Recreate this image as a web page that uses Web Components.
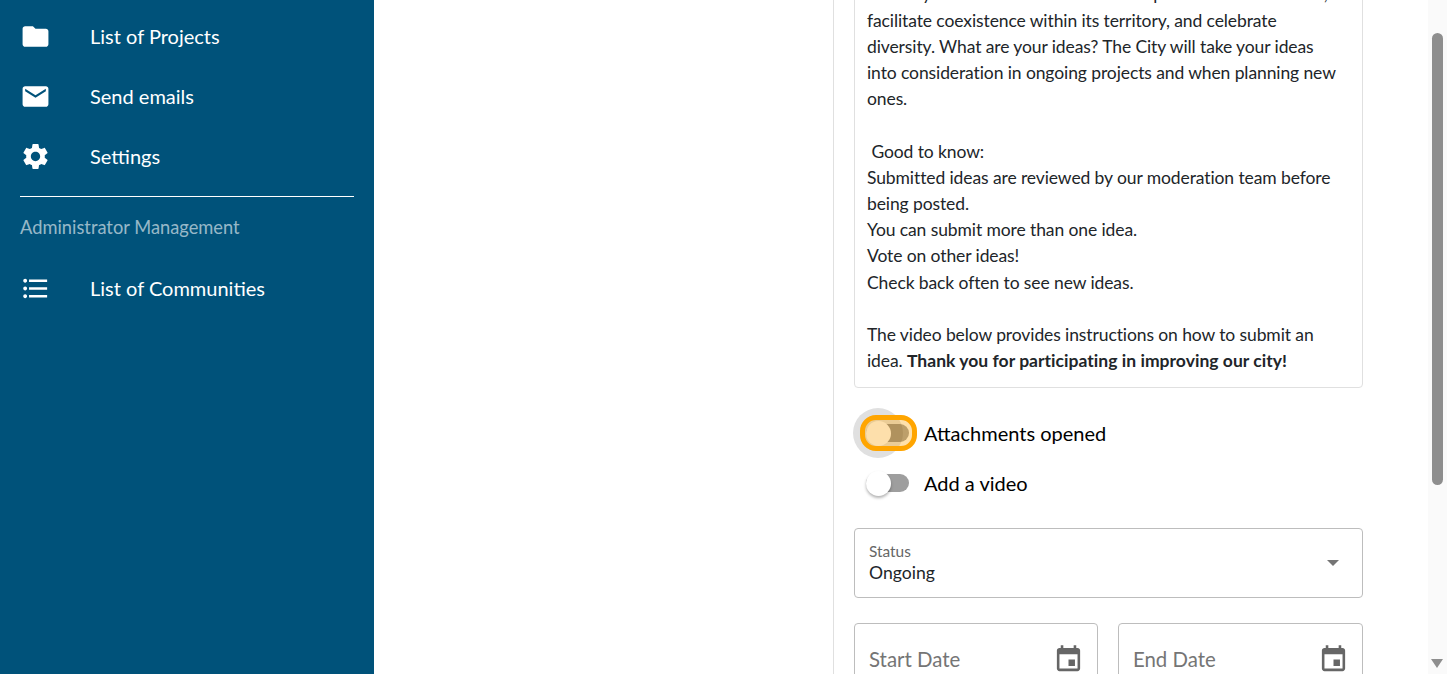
<!DOCTYPE html>
<html lang="en">
<head>
  <meta charset="UTF-8">
  <title>Project form</title>
  <style>
    html, body { height: 100%; }
    body { margin: 0; overflow: hidden; display: flex; background: #fff; font-family: Lato, "Liberation Sans", sans-serif; }
    b { letter-spacing: .03px; }
  </style>
</head>
<body>
  <side-bar>
    <nav-item icon="folder">List of Projects</nav-item>
    <nav-item icon="mail">Send emails</nav-item>
    <nav-item icon="settings">Settings</nav-item>
    <nav-heading>Administrator Management</nav-heading>
    <nav-item icon="list">List of Communities</nav-item>
  </side-bar>
  <form-panel>
    <notice-box>
      The City has chosen to continue to improve its local facilities,
      facilitate coexistence within its territory, and celebrate
      diversity. What are your ideas? The City will take your ideas
      into consideration in ongoing projects and when planning new
      ones.<br><br>
      &nbsp;Good to know:<br>
      Submitted ideas are reviewed by our moderation team before
      being posted.<br>
      You can submit more than one idea.<br>
      Vote on other ideas!<br>
      Check back often to see new ideas.<br><br>
      The video below provides instructions on how to submit an
      idea. <b>Thank you for participating in improving our city!</b>
    </notice-box>
    <toggle-switch focused>Attachments opened</toggle-switch>
    <toggle-switch>Add a video</toggle-switch>
    <select-field label="Status">Ongoing</select-field>
    <date-row>
      <date-field>Start Date</date-field>
      <date-field>End Date</date-field>
    </date-row>
  </form-panel>
  <page-scrollbar></page-scrollbar>

  <script>
    const ICONS = {
      folder: 'M10 4H4c-1.1 0-1.99.9-1.99 2L2 18c0 1.1.9 2 2 2h16c1.1 0 2-.9 2-2V8c0-1.1-.9-2-2-2h-8l-2-2z',
      mail: 'M20 4H4c-1.1 0-1.99.9-1.99 2L2 18c0 1.1.9 2 2 2h16c1.1 0 2-.9 2-2V6c0-1.1-.9-2-2-2zm0 4l-8 5-8-5V6l8 5 8-5v2z',
      settings: 'M19.14 12.94c.04-.3.06-.61.06-.94 0-.32-.02-.64-.07-.94l2.03-1.58c.18-.14.23-.41.12-.61l-1.92-3.32c-.12-.22-.37-.29-.59-.22l-2.39.96c-.5-.38-1.03-.7-1.62-.94l-.36-2.54c-.04-.24-.24-.41-.48-.41h-3.84c-.24 0-.43.17-.47.41l-.36 2.54c-.59.24-1.13.57-1.62.94l-2.39-.96c-.22-.08-.47 0-.59.22L2.74 8.87c-.12.21-.08.47.12.61l2.03 1.58c-.05.3-.09.63-.09.94s.02.64.07.94l-2.03 1.58c-.18.14-.23.41-.12.61l1.92 3.32c.12.22.37.29.59.22l2.39-.96c.5.38 1.03.7 1.62.94l.36 2.54c.05.24.24.41.48.41h3.84c.24 0 .44-.17.47-.41l.36-2.54c.59-.24 1.13-.56 1.62-.94l2.39.96c.22.08.47 0 .59-.22l1.92-3.32c.12-.22.07-.47-.12-.61l-2.01-1.58zM12 15.6c-1.98 0-3.6-1.62-3.6-3.6s1.62-3.6 3.6-3.6 3.6 1.62 3.6 3.6-1.62 3.6-3.6 3.6z',
      list: 'M4 10.5c-.83 0-1.5.67-1.5 1.5s.67 1.5 1.5 1.5 1.5-.67 1.5-1.5-.67-1.5-1.5-1.5zm0-6c-.83 0-1.5.67-1.5 1.5S3.17 7.5 4 7.5 5.5 6.83 5.5 6 4.83 4.5 4 4.5zm0 12c-.83 0-1.5.68-1.5 1.5s.68 1.5 1.5 1.5 1.5-.68 1.5-1.5-.67-1.5-1.5-1.5zM7 19h14v-2H7v2zm0-6h14v-2H7v2zm0-8v2h14V5H7z',
      calendar: 'M17 12h-5v5h5v-5zM16 1v2H8V1H6v2H5c-1.11 0-1.99.9-1.99 2L3 19c0 1.1.89 2 2 2h14c1.1 0 2-.9 2-2V5c0-1.1-.9-2-2-2h-1V1h-2zm3 18H5V8h14v11z'
    };
    const svg = (name, size) => `<svg width="${size}" height="${size}" viewBox="0 0 24 24" fill="currentColor"><path d="${ICONS[name]}"/></svg>`;

    // small helper, every element is just a shadow root with a style and markup
    function define(tag, css, html) {
      customElements.define(tag, class extends HTMLElement {
        constructor() {
          super();
          const shadow = this.attachShadow({mode: 'open'});
          shadow.innerHTML = `<style>${css}</style>` + (typeof html === 'function' ? html(this) : html);
        }
      });
    }

    define('side-bar', `
      :host { display: block; flex: 0 0 374px; height: 100%; padding-top: 6px; box-sizing: border-box; background: #00527a; color: #fff; }
    `, '<slot></slot>');

    define('nav-item', `
      :host { display: flex; align-items: center; height: 60px; padding-left: 20px; font-size: 20px; }
      svg { flex: none; margin-right: 39px; }
    `, el => `${svg(el.getAttribute('icon'), 31)}<slot></slot>`);

    define('nav-heading', `
      :host { display: block; margin: 10px 20px 0; border-top: 1px solid #fff; height: 62px; box-sizing: border-box; padding-top: 20px; font-size: 18.3px; line-height: 21px; color: rgba(255,255,255,.6); }
    `, '<slot></slot>');

    define('form-panel', `
      :host { display: block; flex: 1; height: 100%; overflow: hidden; margin-left: 459px; padding: 0 65px 0 20px; border-left: 1px solid #e0e0e0; }
      .inner { margin-top: -32.7px; }
    `, '<div class="inner"><slot></slot></div>');

    define('notice-box', `
      :host { display: block; padding: 13px 20px 13px 12px; border: 1px solid #e0e0e0; border-radius: 4px; font-size: 17.5px; line-height: 26.2px; letter-spacing: -.1px; color: #212529; margin-bottom: 20px; }
    `, '<slot></slot>');

    define('toggle-switch', `
      :host { display: flex; align-items: center; height: 50px; font-size: 20px; color: #000; }
      .switch { position: relative; flex: none; width: 57px; height: 36px; margin: 0 7px 0 6px; box-sizing: border-box; border-radius: 18px; }
      .halo { position: absolute; left: -7px; top: -7px; width: 50px; height: 50px; border-radius: 50%; background: #e0e0e0; display: none; }
      .track { position: absolute; left: 6px; right: 8px; top: 9px; height: 18px; border-radius: 9px; background: #9e9e9e; }
      .thumb { position: absolute; left: 6px; top: 5.5px; width: 25px; height: 25px; border-radius: 50%; background: #fff; box-shadow: 0 2px 3px rgba(0,0,0,.3); }
      :host([focused]) .halo { display: block; }
      :host([focused]) .switch::after { content: ""; position: absolute; inset: 0; border: 5px solid #ffa500; border-radius: 16px; background: rgba(255,165,0,.33); }
      :host([focused]) .track { z-index: 1; background: rgba(90,60,10,.4); }
      :host([focused]) .thumb { z-index: 2; background: #fddfab; box-shadow: none; }
    `, '<span class="switch"><span class="halo"></span><span class="track"></span><span class="thumb"></span></span><slot></slot>');

    define('select-field', `
      :host { display: flex; align-items: center; justify-content: space-between; height: 70px; margin-top: 20px; padding: 2px 23px 0 14px; box-sizing: border-box; border: 1px solid #bdbdbd; border-radius: 4px; }
      .label { display: block; font-size: 15.4px; line-height: 18px; color: #666; }
      .value { display: block; font-size: 17.6px; line-height: 26px; color: #212529; }
      .arrow { width: 0; height: 0; margin-top: -2px; border: 6.5px solid transparent; border-top-color: #757575; border-bottom-width: 0; }
    `, el => `<span><span class="label">${el.getAttribute('label')}</span><span class="value"><slot></slot></span></span><span class="arrow"></span>`);

    define('date-row', `
      :host { display: grid; grid-template-columns: 244px 245px; gap: 20px; margin-top: 25px; }
    `, '<slot></slot>');

    define('date-field', `
      :host { display: flex; align-items: center; justify-content: space-between; height: 70px; padding: 2px 13px 0 14px; box-sizing: border-box; border: 1px solid #bdbdbd; border-radius: 4px; font-size: 20.4px; color: #757575; }
      svg { color: #666; }
    `, () => `<slot></slot>${svg('calendar', 31)}`);

    define('page-scrollbar', `
      :host { display: block; flex: 0 0 19px; height: 100%; box-sizing: border-box; padding: 33px 4px 0; background: #fafafa; position: relative; }
      .thumb { height: 452px; border-radius: 6px; background: #8e8e8e; }
      .down { position: absolute; left: 3px; bottom: 6px; width: 0; height: 0; border: 6px solid transparent; border-top: 9px solid #8e8e8e; border-bottom-width: 0; }
    `, '<div class="thumb"></div><div class="down"></div>');
  </script>
</body>
</html>
